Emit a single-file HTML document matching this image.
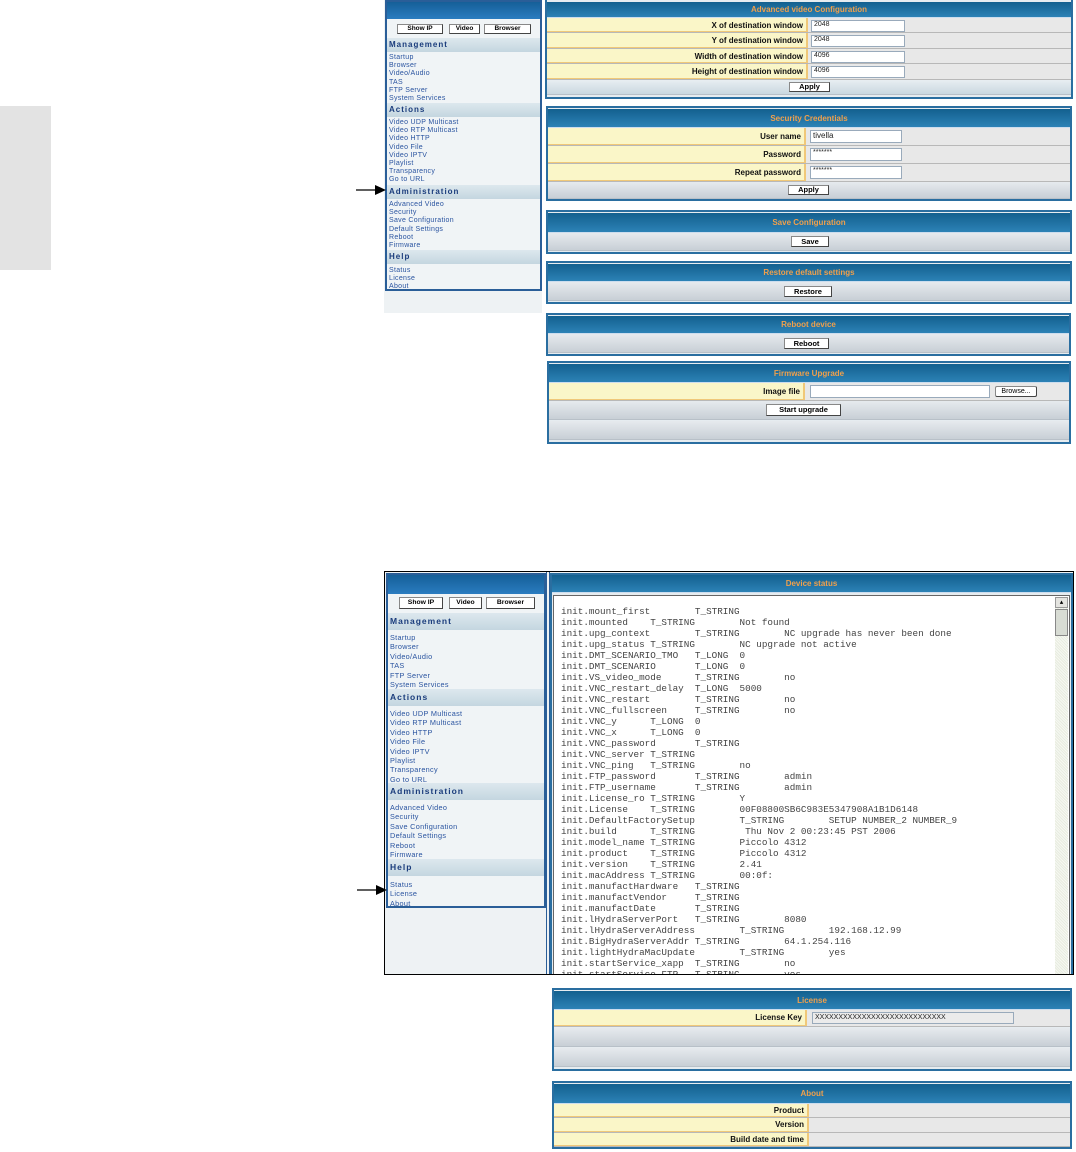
<!DOCTYPE html>
<html><head><meta charset="utf-8"><style>
*{margin:0;padding:0;box-sizing:border-box}
body{width:1076px;height:1152px;background:#fff;position:relative;overflow:hidden;font-family:"Liberation Sans","DejaVu Sans",sans-serif}
.a{position:absolute}
.panel{position:absolute;border:2px solid #2a6ea0;background:#e6ecf0;padding:1px}
.hdr{position:absolute;left:0;right:0;background:linear-gradient(#13608f,#2c82b6);color:#f0a04c;font-weight:bold;font-size:8px;text-align:center;border-bottom:1px solid #cde}
.row{position:absolute;left:0;right:0;background:#e8e8e8;border-bottom:1px solid #b8b8b8}
.lab{position:absolute;left:0;top:0;bottom:0;background:#faf6c8;border-right:2px solid #f0c878;border-bottom:1px solid #f0c878;text-align:right;font-weight:bold;font-size:8px;padding-right:3px;color:#111}
.grey{position:absolute;left:0;right:0;background:linear-gradient(#e6eaee,#c8cfd6);border-bottom:1px solid #b8c0c8}
.inp{position:absolute;background:#fff;border:1px solid #9ab;font-size:7px;padding-left:2px;color:#222}
.btn{position:absolute;background:#fff;border:1px solid #888;border-right-color:#444;border-bottom-color:#444;font-weight:bold;font-size:7.5px;text-align:center;color:#000}
.side{position:absolute;background:#f0f4f6;border:2px solid #2a5e98}
.sh{position:absolute;left:0;right:0;background:linear-gradient(#dde8ee,#c4d6e0);color:#1a3c7c;font-weight:bold;letter-spacing:1px;padding-left:2px}
.it{position:absolute;left:2px;color:#2a54a0;white-space:nowrap;letter-spacing:.3px}
pre{font-family:"Liberation Mono",monospace;font-size:9.3px;line-height:11px;color:#444;tab-size:8;-moz-tab-size:8}
</style></head><body>

<div class="a" style="left:0;top:106px;width:51px;height:164px;background:#e3e3e3"></div>

<!-- top sidebar -->
<div class="a" style="left:384px;top:0;width:158px;height:313px;background:#eef2f4"></div>
<div class="side" style="left:385px;top:0;width:157px;height:291px">
 <div class="a" style="left:0;right:0;top:0;height:17px;background:linear-gradient(#155f98,#2a7cc0)"></div>
 <div class="btn" style="left:10px;top:22px;width:46px;height:10px;font-size:6.5px;line-height:8px">Show IP</div>
 <div class="btn" style="left:62px;top:22px;width:31px;height:10px;font-size:6.5px;line-height:8px">Video</div>
 <div class="btn" style="left:97px;top:22px;width:47px;height:10px;font-size:6.5px;line-height:8px">Browser</div>
 <div class="sh" style="top:36px;height:14px;font-size:8px;line-height:14px">Management</div>
 <div style="font-size:7px;line-height:8.2px">
 <div class="it" style="top:52px">Startup<br>Browser<br>Video/Audio<br>TAS<br>FTP Server<br>System Services</div>
 <div class="sh" style="top:101px;height:14px;font-size:8px;line-height:14px">Actions</div>
 <div class="it" style="top:117px">Video UDP Multicast<br>Video RTP Multicast<br>Video HTTP<br>Video File<br>Video IPTV<br>Playlist<br>Transparency<br>Go to URL</div>
 <div class="sh" style="top:183px;height:14px;font-size:8px;line-height:14px">Administration</div>
 <div class="it" style="top:199px">Advanced Video<br>Security<br>Save Configuration<br>Default Settings<br>Reboot<br>Firmware</div>
 <div class="sh" style="top:248px;height:14px;font-size:8px;line-height:14px">Help</div>
 <div class="it" style="top:265px">Status<br>License<br>About</div>
 </div>
</div>
<svg class="a" style="left:355px;top:184px" width="32" height="12"><line x1="1" y1="6" x2="22" y2="6" stroke="#000" stroke-width="1.3"/><polygon points="20,1 31,6 20,11" fill="#000"/></svg>

<!-- Advanced video -->
<div class="panel" style="left:545px;top:0;width:528px;height:99px;border-top:none">
 <div class="hdr" style="top:2px;height:16px;line-height:16px">Advanced video Configuration</div>
 <div class="row" style="top:18px;height:15px"><div class="lab" style="width:261px;line-height:15px">X of destination window</div><div class="inp" style="left:264px;top:2px;width:94px;height:12px">2048</div></div>
 <div class="row" style="top:33px;height:16px"><div class="lab" style="width:261px;line-height:15px">Y of destination window</div><div class="inp" style="left:264px;top:2px;width:94px;height:12px">2048</div></div>
 <div class="row" style="top:49px;height:15px"><div class="lab" style="width:261px;line-height:15px">Width of destination window</div><div class="inp" style="left:264px;top:2px;width:94px;height:12px">4096</div></div>
 <div class="row" style="top:64px;height:16px"><div class="lab" style="width:261px;line-height:15px">Height of destination window</div><div class="inp" style="left:264px;top:2px;width:94px;height:12px">4096</div></div>
 <div class="grey" style="top:80px;height:15px;background:linear-gradient(#e8eef2,#cad8e0)"><div class="btn" style="left:242px;top:2px;width:41px;height:10px;line-height:8px">Apply</div></div>
</div>

<!-- Security -->
<div class="panel" style="left:546px;top:106px;width:526px;height:95px">
 <div class="hdr" style="top:1px;height:19px;line-height:19px">Security Credentials</div>
 <div class="row" style="top:20px;height:18px"><div class="lab" style="width:258px;line-height:17px">User name</div><div class="inp" style="left:262px;top:2px;width:92px;height:13px;font-size:8px">tivella</div></div>
 <div class="row" style="top:38px;height:18px"><div class="lab" style="width:258px;line-height:17px">Password</div><div class="inp" style="left:262px;top:2px;width:92px;height:13px">*******</div></div>
 <div class="row" style="top:56px;height:18px"><div class="lab" style="width:258px;line-height:17px">Repeat password</div><div class="inp" style="left:262px;top:2px;width:92px;height:13px">*******</div></div>
 <div class="grey" style="top:74px;height:17px"><div class="btn" style="left:240px;top:3px;width:41px;height:10px;line-height:8px">Apply</div></div>
</div>

<!-- Save -->
<div class="panel" style="left:546px;top:210px;width:526px;height:44px">
 <div class="hdr" style="top:1px;height:20px;line-height:20px">Save Configuration</div>
 <div class="grey" style="top:21px;height:18px"><div class="btn" style="left:243px;top:3px;width:38px;height:11px;line-height:9px">Save</div></div>
</div>
<!-- Restore -->
<div class="panel" style="left:546px;top:261px;width:526px;height:43px">
 <div class="hdr" style="top:1px;height:18px;line-height:18px">Restore default settings</div>
 <div class="grey" style="top:19px;height:19px"><div class="btn" style="left:236px;top:4px;width:48px;height:11px;line-height:9px">Restore</div></div>
</div>
<!-- Reboot -->
<div class="panel" style="left:546px;top:313px;width:525px;height:43px">
 <div class="hdr" style="top:1px;height:18px;line-height:18px">Reboot device</div>
 <div class="grey" style="top:19px;height:19px"><div class="btn" style="left:236px;top:4px;width:45px;height:11px;line-height:9px">Reboot</div></div>
</div>
<!-- Firmware -->
<div class="panel" style="left:547px;top:361px;width:524px;height:83px">
 <div class="hdr" style="top:1px;height:19px;line-height:19px">Firmware Upgrade</div>
 <div class="row" style="top:20px;height:18px"><div class="lab" style="width:256px;line-height:17px">Image file</div><div class="inp" style="left:261px;top:2px;width:180px;height:13px"></div><div class="btn" style="left:446px;top:3px;width:42px;height:11px;font-weight:normal;font-size:7px;line-height:9px;border-radius:2px">Browse...</div></div>
 <div class="grey" style="top:38px;height:19px"><div class="btn" style="left:217px;top:3px;width:75px;height:12px;line-height:10px">Start upgrade</div></div>
 <div class="grey" style="top:58px;height:19px"></div>
</div>

<!-- bottom screenshot -->
<div class="a" style="left:384px;top:571px;width:690px;height:404px;border:1px solid #000;background:#eef2f4"></div>
<div class="side" style="left:386px;top:573px;width:160px;height:335px">
 <div class="a" style="left:0;right:0;top:0;height:19px;background:linear-gradient(#155f98,#2a7cc0)"></div>
 <div class="btn" style="left:11px;top:22px;width:44px;height:12px;font-size:6.8px;line-height:10px">Show IP</div>
 <div class="btn" style="left:61px;top:22px;width:33px;height:12px;font-size:6.8px;line-height:10px">Video</div>
 <div class="btn" style="left:98px;top:22px;width:49px;height:12px;font-size:6.8px;line-height:10px">Browser</div>
 <div class="sh" style="top:38px;height:17px;font-size:8.5px;line-height:17px">Management</div>
 <div style="font-size:7.3px;line-height:9.4px">
 <div class="it" style="top:58px">Startup<br>Browser<br>Video/Audio<br>TAS<br>FTP Server<br>System Services</div>
 <div class="sh" style="top:114px;height:17px;font-size:8.5px;line-height:17px">Actions</div>
 <div class="it" style="top:134px">Video UDP Multicast<br>Video RTP Multicast<br>Video HTTP<br>Video File<br>Video IPTV<br>Playlist<br>Transparency<br>Go to URL</div>
 <div class="sh" style="top:208px;height:17px;font-size:8.5px;line-height:17px">Administration</div>
 <div class="it" style="top:228px">Advanced Video<br>Security<br>Save Configuration<br>Default Settings<br>Reboot<br>Firmware</div>
 <div class="sh" style="top:284px;height:17px;font-size:8.5px;line-height:17px">Help</div>
 <div class="it" style="top:305px">Status<br>License<br>About</div>
 </div>
</div>
<div class="a" style="left:546px;top:572px;width:1px;height:402px;background:#2a5e98"></div>
<div class="a" style="left:549px;top:572px;width:1px;height:402px;background:#2a5e98"></div>
<svg class="a" style="left:356px;top:884px" width="32" height="12"><line x1="1" y1="6" x2="22" y2="6" stroke="#000" stroke-width="1.3"/><polygon points="20,1 31,6 20,11" fill="#000"/></svg>

<div class="a" style="left:550px;top:573px;width:523px;height:401px;border:2px solid #2a6ea0;border-bottom:none;background:#e6ecf0">
 <div class="hdr" style="top:0;height:18px;line-height:18px">Device status</div>
 <div class="a" style="left:1px;top:20px;right:1px;bottom:0;background:#fff;border:1px solid #666;border-bottom:none;overflow:hidden">
  <div class="a" style="right:1px;top:1px;width:13px;bottom:0;background:repeating-linear-gradient(45deg,#e8ece0 0 1px,#f6f8f2 1px 2px)"></div>
  <div class="a" style="right:1px;top:1px;width:13px;height:11px;background:#e4e4e0;border:1px solid #999;font-size:7px;line-height:9px;text-align:center">▴</div>
  <div class="a" style="right:1px;top:13px;width:13px;height:27px;background:#d8dcd4;border:1px solid #888"></div>
<pre class="a" style="left:7px;top:10px">init.mount_first	T_STRING
init.mounted	T_STRING	Not found
init.upg_context	T_STRING	NC upgrade has never been done
init.upg_status T_STRING	NC upgrade not active
init.DMT_SCENARIO_TMO	T_LONG	0
init.DMT_SCENARIO	T_LONG	0
init.VS_video_mode	T_STRING	no
init.VNC_restart_delay	T_LONG	5000
init.VNC_restart	T_STRING	no
init.VNC_fullscreen	T_STRING	no
init.VNC_y	T_LONG	0
init.VNC_x	T_LONG	0
init.VNC_password	T_STRING
init.VNC_server T_STRING
init.VNC_ping	T_STRING	no
init.FTP_password	T_STRING	admin
init.FTP_username	T_STRING	admin
init.License_ro T_STRING	Y
init.License	T_STRING	00F08800SB6C983E5347908A1B1D6148
init.DefaultFactorySetup	T_STRING	SETUP NUMBER_2 NUMBER_9
init.build	T_STRING	 Thu Nov 2 00:23:45 PST 2006
init.model_name T_STRING	Piccolo 4312
init.product	T_STRING	Piccolo 4312
init.version	T_STRING	2.41
init.macAddress T_STRING	00:0f:
init.manufactHardware	T_STRING
init.manufactVendor	T_STRING
init.manufactDate	T_STRING
init.lHydraServerPort	T_STRING	8080
init.lHydraServerAddress	T_STRING	192.168.12.99
init.BigHydraServerAddr T_STRING	64.1.254.116
init.lightHydraMacUpdate	T_STRING	yes
init.startService_xapp	T_STRING	no
init.startService_FTP	T_STRING	yes</pre>
 </div>
</div>

<!-- License -->
<div class="panel" style="left:552px;top:988px;width:520px;height:83px">
 <div class="hdr" style="top:1px;height:19px;line-height:19px">License</div>
 <div class="row" style="top:20px;height:17px"><div class="lab" style="width:253px;line-height:16px">License Key</div><div class="inp" style="left:258px;top:2px;width:202px;height:12px;background:#ebebeb;line-height:10px">XXXXXXXXXXXXXXXXXXXXXXXXXXXX</div></div>
 <div class="grey" style="top:38px;height:19px"></div>
 <div class="grey" style="top:58px;height:19px"></div>
</div>
<!-- About -->
<div class="panel" style="left:552px;top:1081px;width:520px;height:68px">
 <div class="hdr" style="top:1px;height:20px;line-height:20px">About</div>
 <div class="row" style="top:21px;height:14px"><div class="lab" style="width:255px;line-height:13px">Product</div></div>
 <div class="row" style="top:35px;height:15px"><div class="lab" style="width:255px;line-height:14px">Version</div></div>
 <div class="row" style="top:50px;height:14px"><div class="lab" style="width:255px;line-height:13px">Build date and time</div></div>
</div>
</body></html>
